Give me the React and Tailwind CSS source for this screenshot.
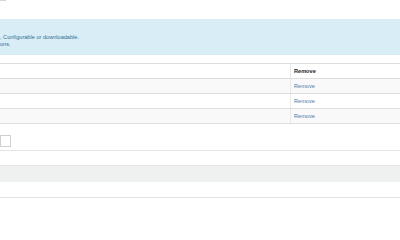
export default function App() {
  const rows = [0, 1, 2];
  return (
    <div className="w-[400px] h-[200px] overflow-hidden bg-white" style={{ fontFamily: '"Liberation Sans", Arial, sans-serif' }}>
      <div className="h-[19px]">
        <div className="w-[6px] h-[1px] bg-[#d6d6d6]"></div>
      </div>
      <div className="h-[36px] bg-[#d9edf7] text-[#31708f] text-[5.6px] leading-[7px] pt-[15px]">
        <div>, Configurable or downloadable.</div>
        <div>ons.</div>
      </div>
      <div className="h-[8px]"></div>
      <div className="border-t border-[#dddddd] text-[5.6px]">
        <div className="flex h-[15px] border-b border-[#dddddd] bg-white">
          <div className="w-[290px]"></div>
          <div className="flex-1 border-l border-[#e8e8e8] pl-[3px] flex items-center font-bold text-[#222]">Remove</div>
        </div>
        {rows.map((r) => (
          <div key={r} className={"flex h-[15px] border-b border-[#dddddd] " + (r === 1 ? "bg-white" : "bg-[#f9f9f9]")}>
            <div className="w-[290px]"></div>
            <div className="flex-1 border-l border-[#e8e8e8] pl-[3px] flex items-center text-[#4a78a8]">
              <span>Remove</span>
            </div>
          </div>
        ))}
      </div>
      <div className="h-[11px]"></div>
      <div className="w-[11px] h-[12px] border border-[#d0d0d0] bg-white"></div>
      <div className="h-[3px]"></div>
      <div className="border-t border-[#e3e3e3] h-[15px]"></div>
      <div className="border-t border-[#e6e6e6] h-[17px] bg-[#eff0f0]"></div>
      <div className="h-[16px] border-b border-[#e3e3e3] bg-white"></div>
    </div>
  );
}
